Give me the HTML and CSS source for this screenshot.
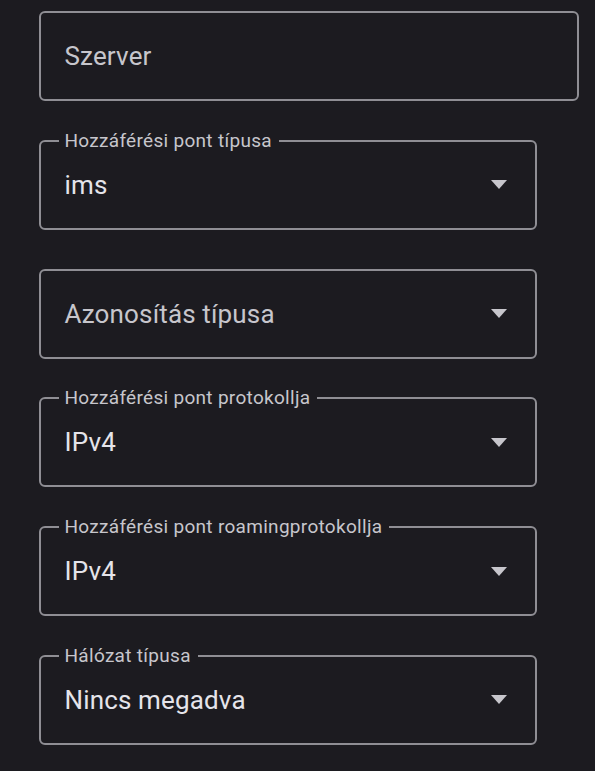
FILE: index.html
```html
<!DOCTYPE html>
<html lang="hu">
<head>
<meta charset="utf-8">
<link rel="stylesheet" href="styles.css">
</head>
<body>
<div class="form">
  <div class="field wide">
    <span class="placeholder">Szerver</span>
  </div>
  <div class="field">
    <span class="label">Hozzáférési pont típusa</span>
    <span class="value">ims</span>
    <span class="arrow"></span>
  </div>
  <div class="field">
    <span class="placeholder">Azonosítás típusa</span>
    <span class="arrow"></span>
  </div>
  <div class="field">
    <span class="label">Hozzáférési pont protokollja</span>
    <span class="value">IPv4</span>
    <span class="arrow"></span>
  </div>
  <div class="field">
    <span class="label">Hozzáférési pont roamingprotokollja</span>
    <span class="value">IPv4</span>
    <span class="arrow"></span>
  </div>
  <div class="field">
    <span class="label">Hálózat típusa</span>
    <span class="value">Nincs megadva</span>
    <span class="arrow"></span>
  </div>
</div>
</body>
</html>
```
FILE: styles.css
```css
html, body {
  margin: 0;
  padding: 0;
  background: #1c1b20;
}
body {
  font-family: Roboto, "Noto Sans", sans-serif;
  height: 771px;
  overflow: hidden;
}
.form {
  display: flex;
  flex-direction: column;
  gap: 38.75px;
  padding: 11px 0 0 38.5px;
}
.field {
  position: relative;
  box-sizing: border-box;
  width: 498.5px;
  height: 90px;
  border: 2px solid #8f8e94;
  border-radius: 6px;
  display: flex;
  align-items: center;
  padding: 0 28px 0 24px;
}
.field.wide {
  width: 540px;
}
.placeholder {
  flex: 1;
  font-size: 26px;
  letter-spacing: 0.15px;
  color: #c7c6cc;
}
.value {
  flex: 1;
  font-size: 26px;
  letter-spacing: 0.15px;
  color: #e5e4ea;
}
.label {
  position: absolute;
  left: 18px;
  top: -12px;
  padding: 0 7px 0 6px;
  background: #1c1b20;
  font-size: 19px;
  letter-spacing: 0.3px;
  line-height: 22px;
  color: #c7c6cc;
}
.arrow {
  width: 0;
  height: 0;
  border-left: 8.5px solid transparent;
  border-right: 8.5px solid transparent;
  border-top: 9px solid #c7c6cc;
}
```
